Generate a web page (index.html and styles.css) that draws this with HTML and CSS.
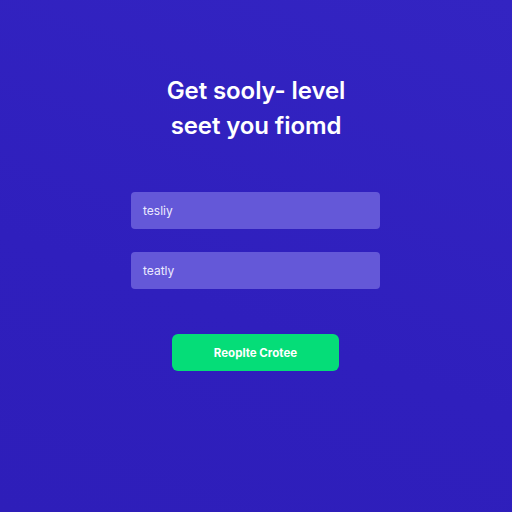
FILE: index.html
```html
<!DOCTYPE html>
<html lang="en">
  <head>
    <meta charset="UTF-8" />
    <meta name="viewport" content="width=device-width, initial-scale=1.0" />
    <title>Get started</title>
    <link rel="stylesheet" href="styles.css">
  </head>
  <body>
    <main class="signup">
      <h1 class="signup-title">Get sooly- level<br />seet you fiomd</h1>
      <form class="signup-form">
        <div class="field">tesliy</div>
        <div class="field">teatly</div>
        <button class="submit-btn" type="button">Reoplte Crotee</button>
      </form>
    </main>
  </body>
</html>
```

FILE: styles.css
```css
body {
  margin: 0;
  height: 512px;
  background: linear-gradient(200deg, #3324c2 0%, #2f1fbd 60%, #2e1eb9 100%);
  font-family: Inter, "Liberation Sans", sans-serif;
  color: #fff;
  overflow: hidden;
}

.signup {
  display: flex;
  flex-direction: column;
  align-items: center;
  padding-top: 73px;
}

.signup-title {
  margin: 0;
  font-size: 24px;
  font-weight: 600;
  line-height: 35px;
  text-align: center;
  letter-spacing: -0.1px;
}

.signup-form {
  display: flex;
  flex-direction: column;
  align-items: center;
  margin-top: 49px;
  margin-right: 1px;
}

.field {
  box-sizing: border-box;
  width: 249px;
  height: 37px;
  margin-bottom: 23px;
  padding-left: 12px;
  display: flex;
  align-items: center;
  background: #6458d8;
  border-radius: 4px;
  font-size: 12px;
  color: #ecebff;
}

.field:last-of-type {
  margin-bottom: 45px;
}

.submit-btn {
  width: 167px;
  height: 37px;
  border: none;
  border-radius: 6px;
  background: #05dd78;
  color: #fff;
  font-family: inherit;
  font-size: 11.5px;
  font-weight: 700;
}
```
